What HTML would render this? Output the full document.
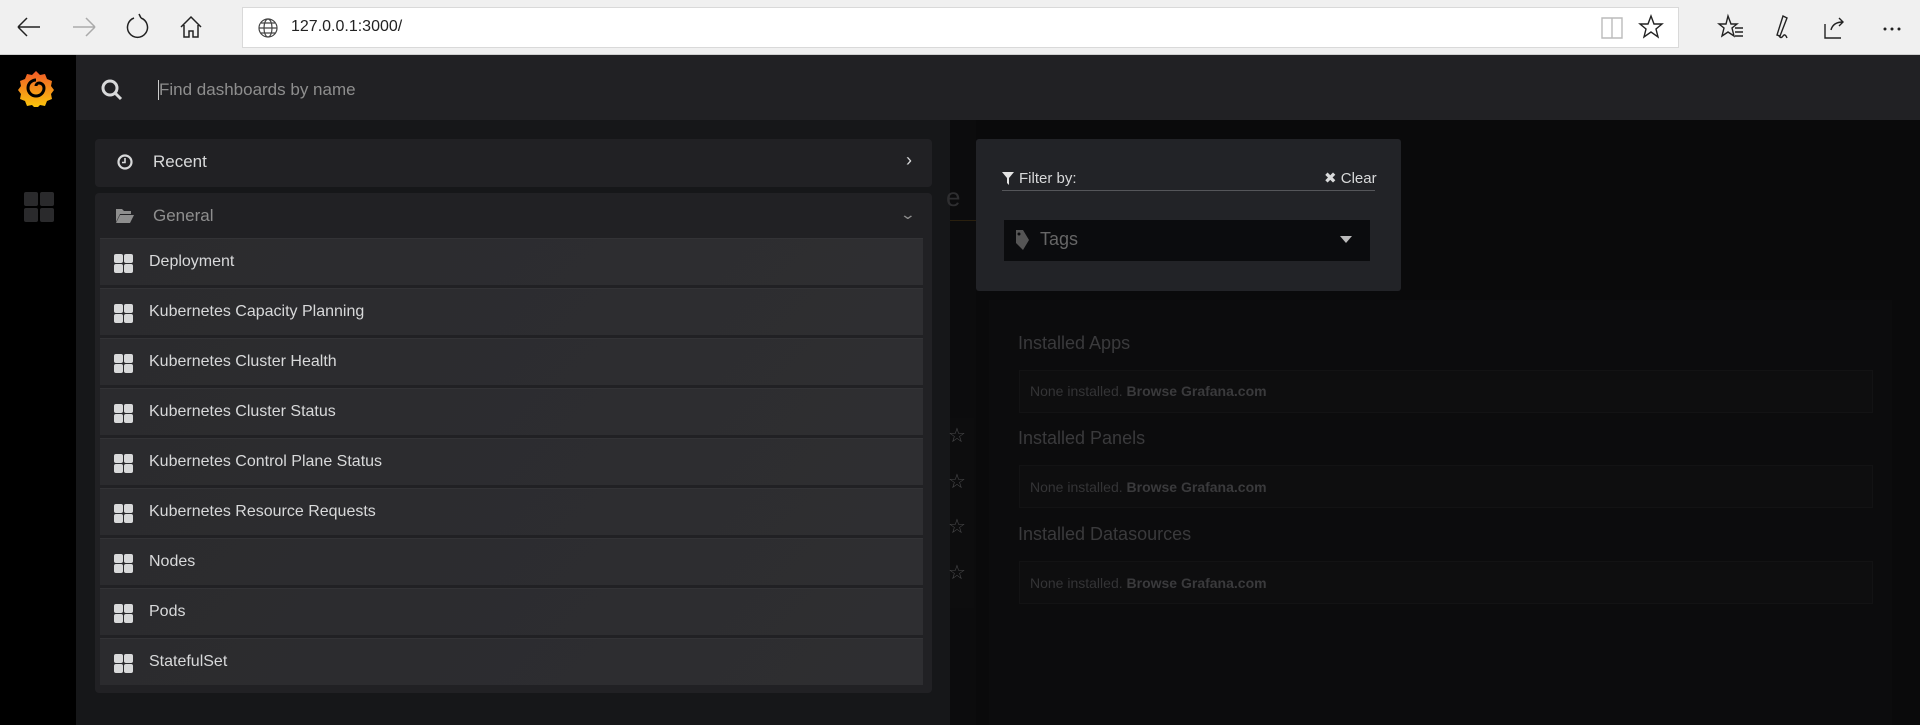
<!DOCTYPE html>
<html><head><meta charset="utf-8"><style>
*{box-sizing:border-box;margin:0;padding:0}
body{width:1920px;height:725px;overflow:hidden;background:#0a0a0b;font-family:"Liberation Sans",sans-serif;position:relative}
.abs{position:absolute}
.chrome{left:0;top:0;width:1920px;height:55px;background:#f0f0f0;border-bottom:1px solid #cfcfcf}
.addr{left:242px;top:7px;width:1437px;height:41px;background:#fff;border:1px solid #d9d9d9}
.side{left:0;top:55px;width:76px;height:670px;background:#000}
.hdr{left:76px;top:55px;width:1844px;height:65px;background:#212124}
.lp{left:76px;top:120px;width:874px;height:605px;background:#161719}
.row{background:#212124;border-radius:4px}
.item{left:100px;width:823px;height:47px;background:linear-gradient(135deg,#2b2b2e,#2e2e31);border-top:1px solid #333336;color:#d8d9da;font-size:16px;line-height:46px;padding-left:49px}
.gi{position:absolute;left:14px;top:15px;width:19px;height:19px}
.gi i{position:absolute;width:8.5px;height:8.5px;background:#d8d9da;border-radius:2px}
.rb{background:#0e0e0f;border:1px solid #131314}
.t1{color:#3a3a3c;font-size:18px}
.t2{color:#343436;font-size:14px}
.t2 b{color:#3a3a3c}
</style></head><body>
<div class="abs chrome"></div>
<svg class="abs" style="left:0;top:0" width="260" height="55" fill="none" stroke="#222" stroke-width="1.5">
<path d="M18 27h22M18 27l9-9M18 27l9 9"/>
<path d="M73 27h22M95 27l-9-9M95 27l-9 9" stroke="#aaa"/>
<path d="M141 18a10 10 0 1 1-7 0M141 18l-2-4"/>
<path d="M181 27l10-10 10 10M184 25v12h5v-6h4v6h5V25"/>
</svg>
<div class="abs addr"></div>
<svg class="abs" style="left:257px;top:17px" width="22" height="22" fill="none" stroke="#444" stroke-width="1.2"><circle cx="11" cy="11" r="9"/><ellipse cx="11" cy="11" rx="4" ry="9"/><path d="M2 11h18M4 6h14M4 16h14"/></svg>
<div class="abs" style="left:291px;top:18px;font-size:16px;color:#222">127.0.0.1:3000/</div>
<svg class="abs" style="left:1595px;top:12px" width="320" height="32" fill="none" stroke="#222" stroke-width="1.4">
<path d="M7 6h10v20H7zM17 6h10v20H17z" stroke="#bbb"/>
<path d="M56 4l3 8h8l-6 5 2 8-7-5-7 5 2-8-6-5h8z"/>
<path d="M133 4l3 8h6l-5 4 2 8-6-4-6 4 2-8-5-4h7zM140 16h8M140 20h8M140 24h8"/>
<path d="M188 4l4 2-7 18-3-1zM184 24q2 3 4 0t4 2"/>
<path d="M230 12v14h16M236 18q2-8 12-8M244 6l4 4-4 4"/>
<circle cx="290" cy="17" r=".8" fill="#222"/><circle cx="297" cy="17" r=".8" fill="#222"/><circle cx="304" cy="17" r=".8" fill="#222"/>
</svg>
<div class="abs side"></div>
<svg class="abs" style="left:17px;top:69px" width="38" height="38" viewBox="0 0 38 38">
<defs><linearGradient id="g" x1="0" y1="0" x2="0" y2="1"><stop offset="0" stop-color="#f05a28"/><stop offset="1" stop-color="#fbca0a"/></linearGradient></defs>
<path d="M19 2l4 4 5-1 2 5 5 2-1 5 3 4-3 4 1 5-5 2-2 5-5-1-4 4-4-4-5 1-2-5-5-2 1-5-3-4 3-4-1-5 5-2 2-5 5 1z" fill="url(#g)"/>
<path d="M19 11a8 8 0 1 0 8 8a5 5 0 0 0-5-5a3 3 0 0 0-3 3" fill="none" stroke="#000" stroke-width="3"/>
</svg>
<div class="abs" style="left:24px;top:192px;width:30px;height:30px">
<i class="abs" style="left:0;top:0;width:14px;height:14px;background:#2a2a2c;border-radius:2px"></i><i class="abs" style="left:16px;top:0;width:14px;height:14px;background:#2a2a2c;border-radius:2px"></i><i class="abs" style="left:0;top:16px;width:14px;height:14px;background:#2a2a2c;border-radius:2px"></i><i class="abs" style="left:16px;top:16px;width:14px;height:14px;background:#2a2a2c;border-radius:2px"></i></div>
<div class="abs hdr"></div>
<svg class="abs" style="left:100px;top:78px" width="24" height="24" fill="none" stroke="#d8d9da" stroke-width="3"><circle cx="10" cy="10" r="7"/><path d="M15 15l6 6"/></svg>
<div class="abs" style="left:158px;top:80px;width:1px;height:20px;background:#ccc"></div>
<div class="abs" style="left:159px;top:80px;font-size:17px;color:#8e8e8e">Find dashboards by name</div>
<div class="abs lp"></div>
<div class="abs" style="left:950px;top:120px;width:26px;height:605px;background:#0c0c0d"></div>
<div class="abs" style="left:946px;top:182px;font-size:26px;color:#2e2e30">e</div>
<div class="abs" style="left:950px;top:220px;width:40px;height:1px;background:#2a200e"></div>
<div class="abs" style="left:989px;top:300px;width:903px;height:425px;background:#0c0c0d"></div>
<div class="abs" style="left:950px;top:418px;width:24px;height:190px;background:#0d0d0e"></div>
<div class="abs" style="left:948px;top:414px;color:#4a4a4c;font-size:20px;line-height:45.5px">☆<br>☆<br>☆<br>☆</div>
<div class="abs t1" style="left:1018px;top:333px">Installed Apps</div>
<div class="abs rb" style="left:1019px;top:370px;width:854px;height:43px"></div>
<div class="abs t2" style="left:1030px;top:383px">None installed. <b>Browse Grafana.com</b></div>
<div class="abs t1" style="left:1018px;top:428px">Installed Panels</div>
<div class="abs rb" style="left:1019px;top:465px;width:854px;height:43px"></div>
<div class="abs t2" style="left:1030px;top:479px">None installed. <b>Browse Grafana.com</b></div>
<div class="abs t1" style="left:1018px;top:524px">Installed Datasources</div>
<div class="abs rb" style="left:1019px;top:561px;width:854px;height:43px"></div>
<div class="abs t2" style="left:1030px;top:575px">None installed. <b>Browse Grafana.com</b></div>
<div class="abs row" style="left:95px;top:139px;width:837px;height:48px"></div>
<svg class="abs" style="left:116px;top:153px" width="18" height="18" fill="none" stroke="#d8d9da" stroke-width="2.2"><circle cx="9" cy="9" r="6.5"/><path d="M9 5v4.5h-3" stroke-width="1.6"/></svg>
<div class="abs" style="left:153px;top:152px;font-size:17px;color:#d8d9da">Recent</div>
<div class="abs" style="left:906px;top:150px;font-size:18px;color:#d8d9da">›</div>
<div class="abs row" style="left:95px;top:193px;width:837px;height:500px"></div>
<svg class="abs" style="left:115px;top:206px" width="20" height="18"><path d="M1 3h6l2 2h7v3H5L1 16z" fill="#8e8e8e"/><path d="M5 9h14l-4 8H1z" fill="#8e8e8e"/></svg>
<div class="abs" style="left:153px;top:206px;font-size:17px;color:#8e8e8e">General</div>
<div class="abs" style="left:902px;top:206px;font-size:14px;color:#8e8e8e;transform:scaleX(1.4)">⌄</div>
<div class="abs item" style="top:238px"><span class="gi"><i style="left:0;top:0"></i><i style="left:10px;top:0"></i><i style="left:0;top:10px"></i><i style="left:10px;top:10px"></i></span>Deployment</div>
<div class="abs item" style="top:288px"><span class="gi"><i style="left:0;top:0"></i><i style="left:10px;top:0"></i><i style="left:0;top:10px"></i><i style="left:10px;top:10px"></i></span>Kubernetes Capacity Planning</div>
<div class="abs item" style="top:338px"><span class="gi"><i style="left:0;top:0"></i><i style="left:10px;top:0"></i><i style="left:0;top:10px"></i><i style="left:10px;top:10px"></i></span>Kubernetes Cluster Health</div>
<div class="abs item" style="top:388px"><span class="gi"><i style="left:0;top:0"></i><i style="left:10px;top:0"></i><i style="left:0;top:10px"></i><i style="left:10px;top:10px"></i></span>Kubernetes Cluster Status</div>
<div class="abs item" style="top:438px"><span class="gi"><i style="left:0;top:0"></i><i style="left:10px;top:0"></i><i style="left:0;top:10px"></i><i style="left:10px;top:10px"></i></span>Kubernetes Control Plane Status</div>
<div class="abs item" style="top:488px"><span class="gi"><i style="left:0;top:0"></i><i style="left:10px;top:0"></i><i style="left:0;top:10px"></i><i style="left:10px;top:10px"></i></span>Kubernetes Resource Requests</div>
<div class="abs item" style="top:538px"><span class="gi"><i style="left:0;top:0"></i><i style="left:10px;top:0"></i><i style="left:0;top:10px"></i><i style="left:10px;top:10px"></i></span>Nodes</div>
<div class="abs item" style="top:588px"><span class="gi"><i style="left:0;top:0"></i><i style="left:10px;top:0"></i><i style="left:0;top:10px"></i><i style="left:10px;top:10px"></i></span>Pods</div>
<div class="abs item" style="top:638px"><span class="gi"><i style="left:0;top:0"></i><i style="left:10px;top:0"></i><i style="left:0;top:10px"></i><i style="left:10px;top:10px"></i></span>StatefulSet</div>
<div class="abs" style="left:976px;top:139px;width:425px;height:152px;background:#222327;border-radius:3px"></div>
<svg class="abs" style="left:1002px;top:172px" width="12" height="13"><path d="M0 0h12L7 6v7L5 11V6z" fill="#e4e4e4"/></svg>
<div class="abs" style="left:1019px;top:170px;font-size:15px;color:#d8d9da">Filter by:</div>
<div class="abs" style="left:1324px;top:169px;font-size:15px;color:#d8d9da">✖ Clear</div>
<div class="abs" style="left:1002px;top:190px;width:373px;height:1px;background:#55565a"></div>
<div class="abs" style="left:1004px;top:220px;width:366px;height:41px;background:#0b0c0e"></div>
<svg class="abs" style="left:1014px;top:230px" width="16" height="20"><path d="M2 0h7l6 10-6 10-7-7z" fill="#555"/><circle cx="5" cy="4" r="1.5" fill="#0b0c0e"/></svg>
<div class="abs" style="left:1040px;top:229px;font-size:18px;color:#666">Tags</div>
<svg class="abs" style="left:1340px;top:236px" width="12" height="8"><path d="M0 0h12L6 7z" fill="#bbb"/></svg>
</body></html>
